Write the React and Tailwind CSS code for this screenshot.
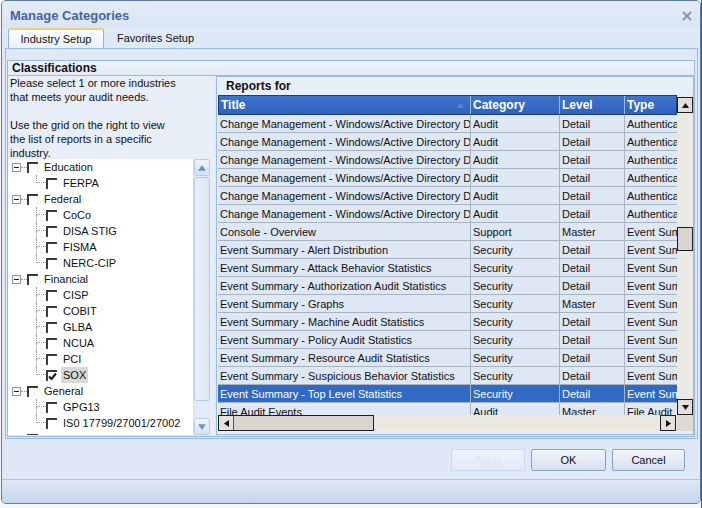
import React from "react";

const tree = [
  { label: "Education", children: ["FERPA"] },
  { label: "Federal", children: ["CoCo", "DISA STIG", "FISMA", "NERC-CIP"] },
  { label: "Financial", children: ["CISP", "COBIT", "GLBA", "NCUA", "PCI", "SOX"] },
  { label: "General", children: ["GPG13", "IS0 17799/27001/27002"] },
  { label: "", children: [] },
];

const cm = ["Change Management - Windows/Active Directory Domain Changes", "Audit", "Detail", "Authentication"];

const reports = [
  cm, cm, cm, cm, cm, cm,
  ["Console - Overview", "Support", "Master", "Event Summary"],
  ["Event Summary - Alert Distribution", "Security", "Detail", "Event Summary"],
  ["Event Summary - Attack Behavior Statistics", "Security", "Detail", "Event Summary"],
  ["Event Summary - Authorization Audit Statistics", "Security", "Detail", "Event Summary"],
  ["Event Summary - Graphs", "Security", "Master", "Event Summary"],
  ["Event Summary - Machine Audit Statistics", "Security", "Detail", "Event Summary"],
  ["Event Summary - Policy Audit Statistics", "Security", "Detail", "Event Summary"],
  ["Event Summary - Resource Audit Statistics", "Security", "Detail", "Event Summary"],
  ["Event Summary - Suspicious Behavior Statistics", "Security", "Detail", "Event Summary"],
  ["Event Summary - Top Level Statistics", "Security", "Detail", "Event Summary"],
  ["File Audit Events", "Audit", "Master", "File Audit"],
];

const Check = ({ checked }) => (
  <div className="w-[11px] h-[11px] shrink-0 border-t-2 border-l-2 border-t-[#3a3a3a] border-l-[#3a3a3a] bg-white flex items-center justify-center">
    {checked && (
      <svg width="9" height="9" viewBox="0 0 9 9">
        <path d="M1 4.5 L3.5 7 L8 1.5" fill="none" stroke="#111" strokeWidth="2" />
      </svg>
    )}
  </div>
);

const Minus = () => (
  <div className="w-[9px] h-[9px] shrink-0 border border-[#7f9db9] bg-white flex items-center justify-center">
    <div className="w-[5px] h-px bg-[#222]" />
  </div>
);

const Tri = ({ dir, color = "#111", size = 7 }) => {
  const d = {
    up: "M0 6 L3.5 1 L7 6 Z",
    down: "M0 1 L3.5 6 L7 1 Z",
    left: "M6 0 L1 3.5 L6 7 Z",
    right: "M1 0 L6 3.5 L1 7 Z",
  }[dir];
  return (
    <svg width={size} height={size} viewBox="0 0 7 7">
      <path d={d} fill={color} />
    </svg>
  );
};

const WinBtn = ({ dir, className = "" }) => (
  <div className={"w-[16px] h-[16px] shrink-0 border border-[#1e1e1e] bg-[#e4e1db] flex items-center justify-center " + className}>
    <Tri dir={dir} />
  </div>
);

const TreeBtn = ({ dir }) => (
  <div className="h-[17px] shrink-0 rounded-[2px] border border-[#b9cde8] bg-gradient-to-b from-[#eef4fc] to-[#d4e2f4] flex items-center justify-center">
    <Tri dir={dir} color="#6f8fbf" size={8} />
  </div>
);

const Button = ({ children, disabled }) => (
  <div
    className={
      "h-[22px] flex items-center justify-center rounded-[2px] border bg-gradient-to-b " +
      (disabled
        ? "w-[74px] border-[#c9d7ea] from-[#eef3fa] to-[#e2eaf6] text-[#dce5f1]"
        : "w-[75px] border-[#8b9fbd] from-[#f3f6fb] to-[#d5e0ef] text-[#111]")
    }
  >
    {children}
  </div>
);

export default function App() {
  return (
    <div className="w-[702px] h-[508px] overflow-hidden bg-[#f4f6f9] flex font-['Liberation_Sans',Arial,sans-serif] text-[11px] text-[#111]">
      <div className="ml-[1px] w-[700px] h-[504px] shrink-0 border border-[#5f7aa3] rounded-[5px] bg-[#dfe8f6] flex flex-col overflow-hidden">
        {/* TITLE */}
        <div className="h-[27px] shrink-0 flex items-center justify-between pl-[8px] pr-[8px] bg-gradient-to-b from-[#e3ecf8] to-[#d9e5f4]">
          <span className="text-[13px] font-bold text-[#45659a] pt-[3px]">Manage Categories</span>
          <svg width="10" height="10" viewBox="0 0 10 10" className="mt-[3px]">
            <path d="M1 1 L9 9 M9 1 L1 9" stroke="#8797ae" strokeWidth="2" />
          </svg>
        </div>

        {/* TABS + BODY */}
        <div className="h-[411px] shrink-0 pl-[3px] pr-[2px] flex flex-col">
          <div className="h-[20px] shrink-0 flex items-end pl-[3px]">
            <div className="w-[96px] h-[20px] rounded-t-[3px] border border-b-0 border-[#8db2e3] border-t-2 border-t-[#f1cd7e] bg-gradient-to-b from-[#ffffff] to-[#e9f0fa] flex items-center justify-center">
              Industry Setup
            </div>
            <div className="h-[20px] ml-[13px] flex items-center">Favorites Setup</div>
          </div>

          <div className="h-[391px] shrink-0 border border-[#99bbe8] bg-[#dfe8f6] pt-[11px] pb-[1px] pl-[1px] pr-[2px]">
            <div className="h-[377px] border border-[#99bbe8] flex flex-col overflow-hidden">
              <div className="h-[15px] shrink-0 border-b border-[#99bbe8] bg-gradient-to-b from-[#eef3fa] to-[#e2eaf6] pl-[4px] flex items-center text-[12px] font-bold">
                Classifications
              </div>
              <div className="h-[359px] shrink-0 flex gap-[1px] bg-[#dfe8f6] overflow-hidden">
                {/* LEFT */}
                <div className="w-[207px] shrink-0 flex flex-col bg-[#e8eef8]">
                  <div className="h-[83px] shrink-0 pl-[2px] leading-[14px]">
                    <div>Please select 1 or more industries</div>
                    <div>that meets your audit needs.</div>
                    <div>&nbsp;</div>
                    <div>Use the grid on the right to view</div>
                    <div>the list of reports in a specific</div>
                    <div>industry.</div>
                  </div>
                  <div className="h-[276px] shrink-0 flex w-[202px] overflow-hidden">
                    <div className="w-[185px] h-[276px] bg-white overflow-hidden">
                      {tree.map((node, i) => (
                        <div key={i}>
                          <div className="h-[16px] flex items-center pl-[4px]">
                            <Minus />
                            <div className="w-[6px] border-t border-dotted border-[#9a9a9a]" />
                            <Check />
                            <span className="ml-[6px] whitespace-nowrap">{node.label}</span>
                          </div>
                          {node.children.map((c, j) => {
                            const last = j === node.children.length - 1;
                            return (
                              <div key={c} className="h-[16px] flex items-center">
                                <div className="w-[28px] shrink-0" />
                                <div className="w-[10px] h-[16px] shrink-0 flex flex-col">
                                  <div className="h-[8px] border-l border-b border-dotted border-[#9a9a9a]" />
                                  <div className={"flex-1 " + (last ? "" : "border-l border-dotted border-[#9a9a9a]")} />
                                </div>
                                <Check checked={c === "SOX"} />
                                <span className={"ml-[4px] px-[2px] whitespace-nowrap " + (c === "SOX" ? "bg-[#d8d8d8]" : "")}>
                                  {c}
                                </span>
                              </div>
                            );
                          })}
                        </div>
                      ))}
                    </div>
                    <div className="w-[17px] h-[276px] shrink-0 flex flex-col bg-[#e3ebf6] border-l border-[#d3e0f1]">
                      <TreeBtn dir="up" />
                      <div className="h-[224px] shrink-0 mt-[1px] rounded-[2px] border border-[#b5cae6] bg-gradient-to-r from-[#eaf1fb] to-[#dbe6f4]" />
                      <div className="flex-1" />
                      <TreeBtn dir="down" />
                    </div>
                  </div>
                </div>

                {/* RIGHT */}
                <div className="flex-1 h-[359px] border border-[#99bbe8] bg-[#e9eff8] flex flex-col">
                  <div className="h-[18px] shrink-0 pl-[9px] flex items-center text-[12px] font-bold">Reports for</div>
                  <div className="flex pl-[1px] shrink-0">
                    <div className="w-[459px] flex flex-col">
                      <div className="h-[20px] shrink-0 flex border border-[#1f3d78] bg-gradient-to-b from-[#3f74cc] to-[#2f62bd] text-white text-[12px] font-bold">
                        <div className="w-[252px] shrink-0 border-r border-[#9db6e2] pl-[2px] flex items-center justify-between pr-[6px]">
                          <span>Title</span>
                          <Tri dir="up" color="#5b86d0" />
                        </div>
                        <div className="w-[89px] shrink-0 border-r border-[#9db6e2] pl-[2px] flex items-center">Category</div>
                        <div className="w-[65px] shrink-0 border-r border-[#9db6e2] pl-[2px] flex items-center">Level</div>
                        <div className="flex-1 pl-[2px] flex items-center">Type</div>
                      </div>
                      <div className="h-[300px] shrink-0 overflow-hidden">
                        {reports.map((r, i) => {
                          const sel = i === 15;
                          return (
                            <div
                              key={i}
                              className={
                                "h-[18px] flex border-b border-[#a9b2bf] leading-[18px] " +
                                (sel ? "bg-[#316ac5] text-white" : "bg-[#dee7f4]")
                              }
                            >
                              <div className="w-[253px] shrink-0 border-r border-[#a9b2bf] pl-[2px] overflow-hidden whitespace-nowrap">{r[0]}</div>
                              <div className="w-[89px] shrink-0 border-r border-[#a9b2bf] pl-[2px] overflow-hidden whitespace-nowrap">{r[1]}</div>
                              <div className="w-[65px] shrink-0 border-r border-[#a9b2bf] pl-[2px] overflow-hidden whitespace-nowrap">{r[2]}</div>
                              <div className="flex-1 pl-[2px] overflow-hidden whitespace-nowrap">{r[3]}</div>
                            </div>
                          );
                        })}
                      </div>
                    </div>
                    <div className="w-[16px] h-[320px] bg-[#ebe9e4] flex flex-col">
                      <WinBtn dir="up" className="mt-[2px]" />
                      <div className="h-[24px] shrink-0 mt-[114px] border border-[#1e1e1e] bg-[#d8d5cf]" />
                      <div className="flex-1" />
                      <WinBtn dir="down" />
                    </div>
                  </div>
                  <div className="h-[16px] shrink-0 flex pl-[1px]">
                    <div className="w-[459px] flex bg-[#ebe8e1]">
                      <div className="w-[156px] flex border border-[#1e1e1e]">
                        <div className="w-[15px] flex items-center justify-center border-r border-[#555] bg-[#e4e1db]">
                          <Tri dir="left" />
                        </div>
                        <div className="flex-1 bg-[#d8d5cf]" />
                      </div>
                      <div className="flex-1" />
                      <WinBtn dir="right" className="mr-[1px]" />
                    </div>
                    <div className="flex-1 bg-[#dedad3]" />
                  </div>
                  <div className="flex-1" />
                </div>
              </div>
            </div>
          </div>
        </div>

        {/* BUTTONS */}
        <div className="h-[40px] shrink-0 flex items-start justify-end gap-[6px] pt-[10px] pr-[15px]">
          <Button disabled>Apply</Button>
          <Button>OK</Button>
          <div className="h-[22px] w-[73px] flex items-center justify-center rounded-[2px] border border-[#8b9fbd] bg-gradient-to-b from-[#f3f6fb] to-[#d5e0ef]">
            Cancel
          </div>
        </div>

        {/* FOOTER */}
        <div className="flex-1 border-t border-[#a9c1e3] bg-gradient-to-b from-[#dde7f5] to-[#c5d6ee]" />
      </div>
      <div className="flex-1 h-full bg-[#2e5b9e]" />
    </div>
  );
}
